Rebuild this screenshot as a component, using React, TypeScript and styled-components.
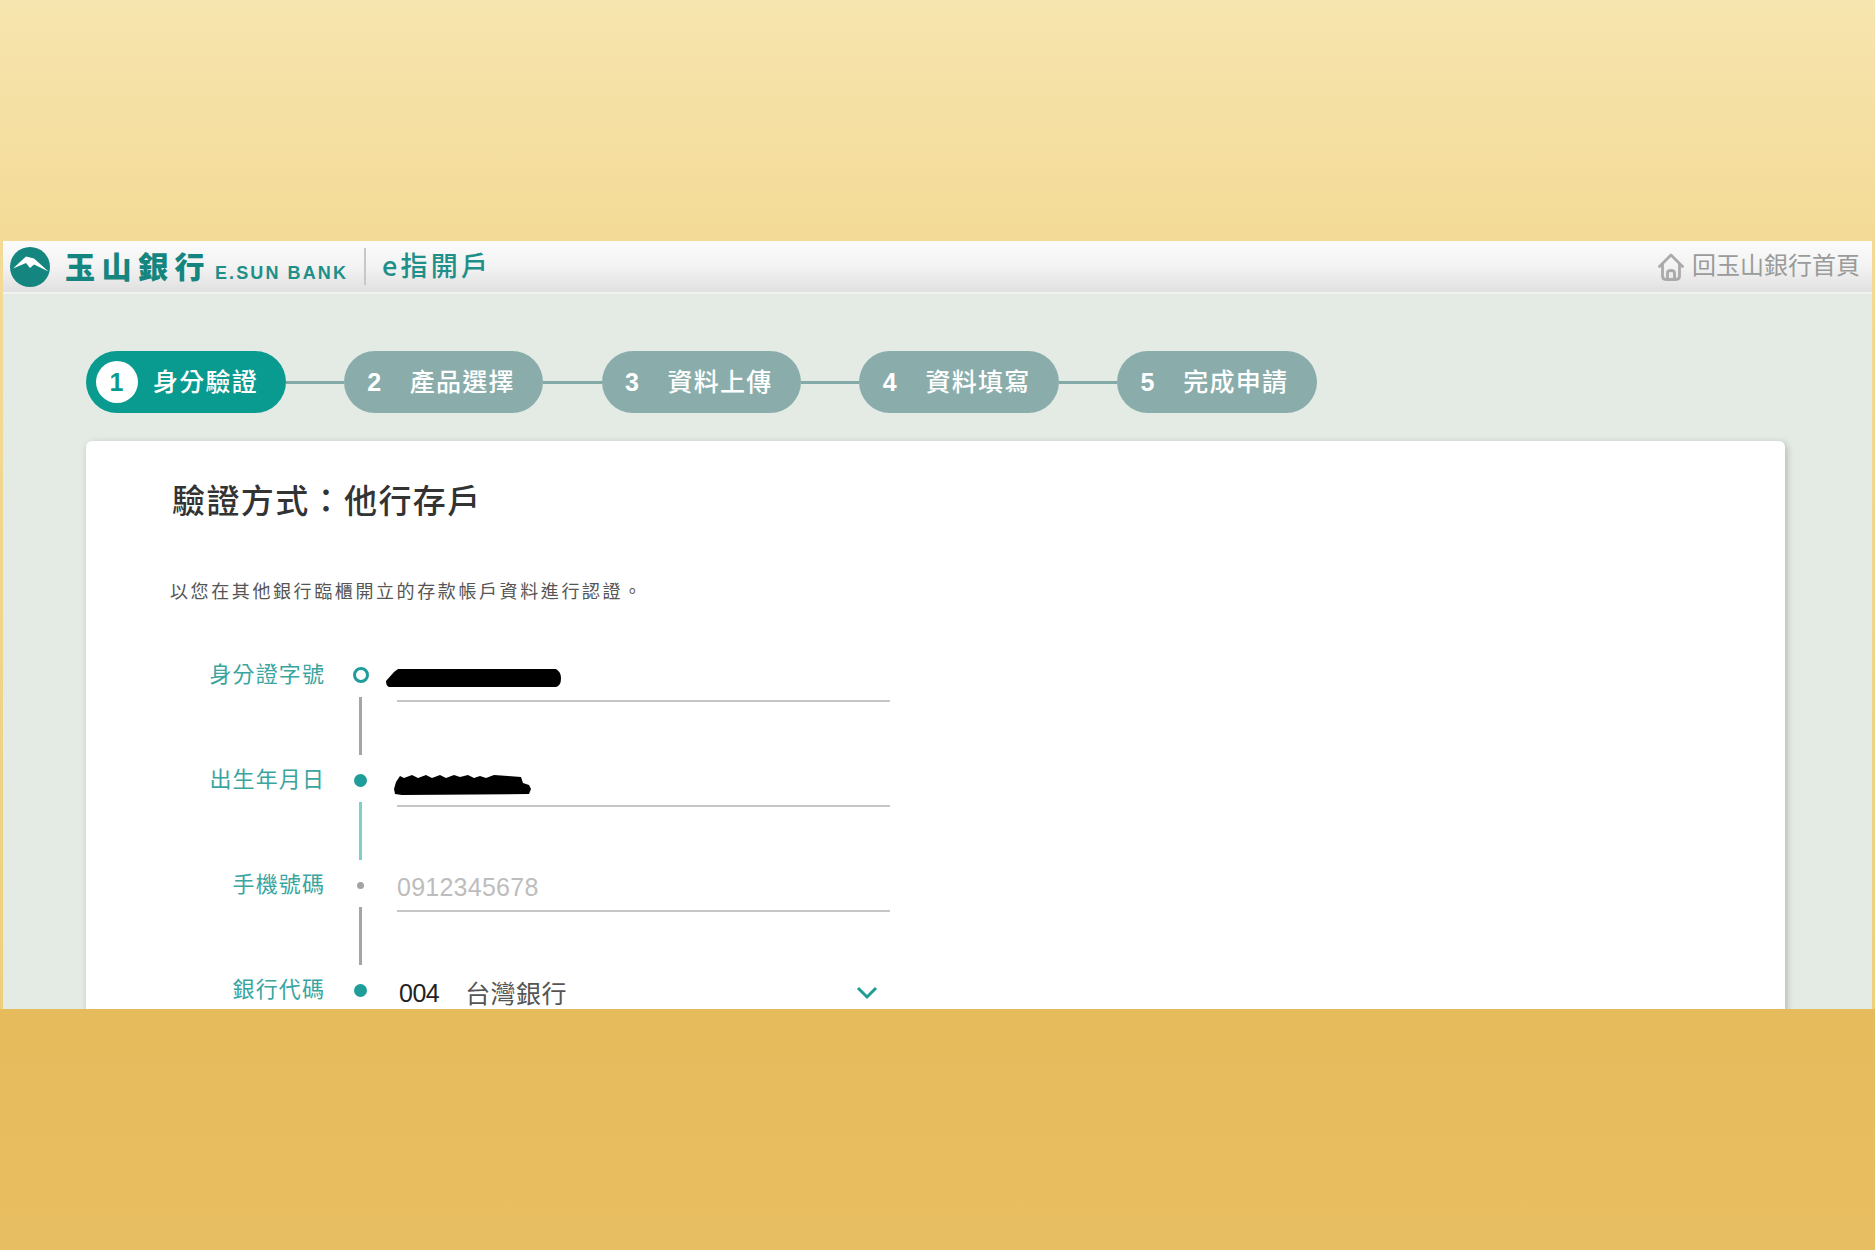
import React from "react";
import styled, { createGlobalStyle } from "styled-components";

const cjk = `"Noto Sans CJK TC", "Liberation Sans", sans-serif`;
const latin = `"Liberation Sans", "Noto Sans CJK TC", sans-serif`;

const GlobalStyle = createGlobalStyle`
	html, body {
		margin: 0;
		padding: 0;
		background: #e6bb5c;
	}
`;

const Page = styled.div`
	width: 1875px;
	height: 1250px;
	display: flex;
	flex-direction: column;
	overflow: hidden;
	background: linear-gradient(180deg, #f7e5af 0, #f3da96 241px, #ecd07e 1009px, #e6bb5c 1009px);
`;

const TopBand = styled.div`
	height: 241px;
	flex: none;
`;

const BottomBand = styled.div`
	flex: 1;
	background: linear-gradient(180deg, #e6bb5c, #e8be62);
`;

const Screen = styled.div`
	height: 768px;
	flex: none;
	margin: 0 3px;
	background: #e4ebe5;
	overflow: hidden;
`;

const Header = styled.header`
	height: 51px;
	display: flex;
	align-items: center;
	padding-left: 7px;
	padding-right: 12px;
	background: linear-gradient(180deg, #fbfbfb 0%, #f3f3f3 50%, #dfe0df 100%);
	border-bottom: 2px solid #f1f3f1;
`;

const BankName = styled.span`
	margin-left: 15px;
	margin-top: -4px;
	font-family: ${cjk};
	font-size: 30px;
	font-weight: 900;
	letter-spacing: 6.5px;
	color: #14857f;
	white-space: nowrap;
`;

const BankLatin = styled.span`
	margin-left: 4px;
	margin-top: 13px;
	font-family: ${latin};
	font-size: 18px;
	font-weight: 700;
	letter-spacing: 2.1px;
	color: #1f8f89;
	white-space: nowrap;
`;

const HeaderDivider = styled.span`
	width: 2px;
	height: 37px;
	margin-left: 16px;
	background: #c4c8c6;
`;

const ProductName = styled.span`
	margin-left: 16px;
	margin-top: -5px;
	font-family: ${cjk};
	font-size: 27px;
	font-weight: 500;
	letter-spacing: 3.2px;
	color: #1f8f89;
	white-space: nowrap;
`;

const HomeLink = styled.a`
	margin-left: auto;
	display: flex;
	align-items: center;
	gap: 8px;
	font-family: ${cjk};
	font-size: 24px;
	color: #9a9b9b;
	white-space: nowrap;
`;

const HomeText = styled.span`
	margin-top: -7px;
`;

const Steps = styled.ol`
	display: flex;
	align-items: center;
	list-style: none;
	margin: 0;
	padding: 57px 0 0 83px;
`;

const StepItem = styled.li`
	display: flex;
	align-items: center;
`;

const StepPill = styled.div<{ $active?: boolean }>`
	width: 199.5px;
	height: 62px;
	box-sizing: border-box;
	display: flex;
	align-items: center;
	padding-left: ${(p) => (p.$active ? "10px" : "24px")};
	border-radius: 31px;
	background: ${(p) => (p.$active ? "#0a9b90" : "#8aadab")};
	color: #fff;
	font-family: ${cjk};
	font-size: 25px;
	font-weight: 500;
	letter-spacing: 1.25px;
`;

const StepLabel = styled.span`
	margin-top: -5px;
`;

const StepNumber = styled.span<{ $active?: boolean }>`
	flex: none;
	font-family: ${latin};
	font-weight: 700;
	font-size: 25px;
	display: flex;
	align-items: center;
	justify-content: center;
	width: ${(p) => (p.$active ? "42px" : "14px")};
	height: ${(p) => (p.$active ? "42px" : "auto")};
	margin-right: ${(p) => (p.$active ? "15px" : "28px")};
	border-radius: 50%;
	background: ${(p) => (p.$active ? "#fff" : "transparent")};
	color: ${(p) => (p.$active ? "#0a9b90" : "#fff")};
`;

const StepLink = styled.span`
	width: 58.3px;
	height: 3px;
	background: #83aaa7;
`;

const Card = styled.main`
	margin: 28px 87px 0 83px;
	height: 620px;
	box-sizing: border-box;
	padding: 34px 86px 0;
	background: #fff;
	border-radius: 6px;
	box-shadow: 2px 2px 7px rgba(0, 0, 0, 0.22);
`;

const Title = styled.h1`
	margin: 0;
	height: 48px;
	line-height: 48px;
	font-family: "Noto Sans CJK TC", sans-serif;
	font-size: 33px;
	font-weight: 500;
	letter-spacing: 1.4px;
	color: #333;
`;

const Description = styled.p`
	margin: 52px 0 0 -2px;
	height: 30px;
	line-height: 30px;
	font-family: ${cjk};
	font-size: 18px;
	letter-spacing: 2.6px;
	color: #555;
`;

const Form = styled.div`
	margin-top: 48px;
	display: flex;
	flex-direction: column;
`;

const Row = styled.div`
	height: 105px;
	display: grid;
	grid-template-columns: 153px 71px 494px;
	align-items: start;
`;

const Label = styled.label`
	height: 44px;
	line-height: 39px;
	text-align: right;
	font-family: ${cjk};
	font-size: 22px;
	letter-spacing: 1.1px;
	color: #3aa5a0;
	white-space: nowrap;
`;

const Marker = styled.div`
	display: flex;
	flex-direction: column;
	align-items: center;
`;

const DotBox = styled.div`
	height: 44px;
	display: flex;
	align-items: center;
	justify-content: center;
`;

const Dot = styled.span<{ $kind: "ring" | "filled" | "idle" }>`
	box-sizing: border-box;
	border-radius: 50%;
	width: ${(p) => (p.$kind === "idle" ? "7px" : p.$kind === "ring" ? "16px" : "13px")};
	height: ${(p) => (p.$kind === "idle" ? "7px" : p.$kind === "ring" ? "16px" : "13px")};
	background: ${(p) =>
		p.$kind === "filled" ? "#1f9d9a" : p.$kind === "idle" ? "#a3a3a3" : "#fff"};
	border: ${(p) => (p.$kind === "ring" ? "3.5px solid #1f9d9a" : "none")};
`;

const Connector = styled.span<{ $teal?: boolean }>`
	width: 3px;
	height: 58px;
	background: ${(p) => (p.$teal ? "#7fcfc9" : "#a5a5a5")};
`;

const Field = styled.div<{ $plain?: boolean }>`
	margin-left: 1px;
	height: 47px;
	display: flex;
	align-items: center;
	border-bottom: ${(p) => (p.$plain ? "none" : "2px solid #c6c6c6")};
`;

const Placeholder = styled.span`
	font-family: ${latin};
	font-size: 25px;
	letter-spacing: 0.25px;
	color: #bdbdbd;
	padding-top: 2px;
`;

const BankCode = styled.span`
	margin-left: 2px;
	padding-top: 3px;
	font-family: ${latin};
	font-size: 25px;
	letter-spacing: -0.5px;
	color: #222;
`;

const SelectName = styled.span`
	margin-left: 26px;
	font-family: ${cjk};
	font-size: 25px;
	letter-spacing: 0.4px;
	color: #555;
`;

const Chevron = styled.svg`
	margin-left: auto;
	margin-right: 12px;
	margin-top: 3px;
`;

const Redaction = styled.svg<{ $shift: number }>`
	margin-left: ${(p) => p.$shift}px;
	margin-top: ${(p) => (p.$shift < -5 ? "2px" : "6px")};
`;

const Logo = () => (
	<svg width="40" height="40" viewBox="0 0 40 40">
		<circle cx="20" cy="20" r="20" fill="#14857f" />
		<path d="M3 21.5 L16 9.5 L24 11.5 L38.5 24.5 L24 17.5 L20 21 L16 16 Z" fill="#fff" />
	</svg>
);

const HomeIcon = () => (
	<svg width="26" height="28" viewBox="0 0 26 28" fill="none" stroke="#aaaaaa" strokeWidth="2.8">
		<path d="M1.5 13.5 L13 2 L24.5 13.5" strokeLinecap="round" strokeLinejoin="round" />
		<path d="M4.5 11 V23 Q4.5 26.5 8 26.5 H18 Q21.5 26.5 21.5 23 V11" />
		<path d="M9.5 26.5 V20 Q9.5 17.5 13 17.5 Q16.5 17.5 16.5 20 V26.5" />
	</svg>
);

const steps = ["身分驗證", "產品選擇", "資料上傳", "資料填寫", "完成申請"];

export default function App() {
	return (
		<>
			<GlobalStyle />
			<Page>
				<TopBand />
				<Screen>
					<Header>
						<Logo />
						<BankName>玉山銀行</BankName>
						<BankLatin>E.SUN BANK</BankLatin>
						<HeaderDivider />
						<ProductName>e指開戶</ProductName>
						<HomeLink>
							<HomeIcon />
							<HomeText>回玉山銀行首頁</HomeText>
						</HomeLink>
					</Header>

					<Steps>
						{steps.map((name, i) => (
							<StepItem key={name}>
								<StepPill $active={i === 0}>
									<StepNumber $active={i === 0}>{i + 1}</StepNumber>
									<StepLabel>{name}</StepLabel>
								</StepPill>
								{i < steps.length - 1 && <StepLink />}
							</StepItem>
						))}
					</Steps>

					<Card>
						<Title>{"驗證方式\uFF1A他行存戶"}</Title>
						<Description>以您在其他銀行臨櫃開立的存款帳戶資料進行認證。</Description>
						<Form>
							<Row>
								<Label>身分證字號</Label>
								<Marker>
									<DotBox>
										<Dot $kind="ring" />
									</DotBox>
									<Connector />
								</Marker>
								<Field>
									<Redaction $shift={-11} width="175" height="20" viewBox="0 0 175 20">
										<path
											d="M0 13 L8 4 L12 1 L170 1 Q175 4 175 10 Q175 18 170 19 L3 19 Q0 18 0 13 Z"
											fill="#000"
										/>
									</Redaction>
								</Field>
							</Row>
							<Row>
								<Label>出生年月日</Label>
								<Marker>
									<DotBox>
										<Dot $kind="filled" />
									</DotBox>
									<Connector $teal />
								</Marker>
								<Field>
									<Redaction $shift={-3} width="137" height="22" viewBox="0 0 137 22">
										<path
											d="M2 8 L6 2 L10 4 L18 1 L24 4 L32 1 L38 4 L46 1 L52 4 L60 1 L66 3 L74 1 L80 4 L86 2 L92 4 L100 1 L114 2 L127 3 L129 9 L135 11 L137 15 L135 20 L8 21 L1 20 L0 15 Z"
											fill="#000"
										/>
									</Redaction>
								</Field>
							</Row>
							<Row>
								<Label>手機號碼</Label>
								<Marker>
									<DotBox>
										<Dot $kind="idle" />
									</DotBox>
									<Connector />
								</Marker>
								<Field>
									<Placeholder>0912345678</Placeholder>
								</Field>
							</Row>
							<Row>
								<Label>銀行代碼</Label>
								<Marker>
									<DotBox>
										<Dot $kind="filled" />
									</DotBox>
								</Marker>
								<Field $plain>
									<BankCode>004</BankCode>
									<SelectName>台灣銀行</SelectName>
									<Chevron width="22" height="14" viewBox="0 0 22 14" fill="none" stroke="#1f9d94" strokeWidth="3">
										<path d="M2 2 L11 11 L20 2" />
									</Chevron>
								</Field>
							</Row>
						</Form>
					</Card>
				</Screen>
				<BottomBand />
			</Page>
		</>
	);
}
